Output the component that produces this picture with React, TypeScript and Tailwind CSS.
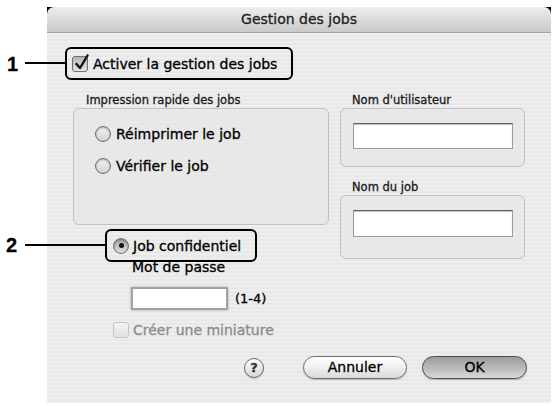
import React from "react";

function Radio({ checked = false }: { checked?: boolean }) {
  return (
    <div
      className={
        "w-[16px] h-[16px] rounded-full border border-[#6e6e6e] flex items-center justify-center shrink-0 shadow-[inset_0_1px_2px_rgba(0,0,0,0.3)] " +
        (checked
          ? "bg-gradient-to-b from-[#a4a4a4] to-[#e0e0e0]"
          : "bg-gradient-to-b from-[#f4f4f4] to-[#d2d2d2]")
      }
    >
      {checked && <div className="w-[5px] h-[5px] rounded-full bg-[#111]" />}
    </div>
  );
}

function TextField({ h }: { h: string }) {
  return (
    <div
      className={
        "w-[160px] bg-white border border-[#9c9c9c] border-t-[#5e5e5e] shadow-[inset_0_1px_1px_rgba(0,0,0,0.25)] " +
        h
      }
    />
  );
}

export default function App() {
  return (
    <div className="relative w-[556px] h-[406px] bg-white overflow-hidden pt-[7px] pl-[47px] font-['DejaVu_Sans',sans-serif] text-black [-webkit-text-stroke:0.3px_currentColor]">
      <div className="relative w-[504px] h-[396px] flex flex-col">
        <div className="absolute left-0 top-0 w-[7px] h-[7px] bg-black" />
        <div className="absolute right-0 top-0 w-[7px] h-[7px] bg-black" />
        <div className="relative z-10 h-[26px] shrink-0 rounded-t-[7px] bg-gradient-to-b from-[#eeeeee] to-[#c9c9c9] border-b border-[#a3a3a3] flex items-center justify-center text-[14px] text-[#1e1e1e]">
          Gestion des jobs
        </div>
        <div className="flex-1 flex flex-col bg-[repeating-linear-gradient(180deg,#eeeeee_0px,#eeeeee_2px,#e8e8e8_2px,#e8e8e8_4px)]">
          {/* annotated checkbox */}
          <div className="mt-[14px] ml-[18px] w-[228px] h-[33px] border-2 border-black rounded-[6px] flex items-center pl-[5px] gap-[5px]">
            <div className="relative w-[16px] h-[16px] rounded-[3px] border border-[#6f6f6f] bg-gradient-to-b from-[#b4b4b4] to-[#e6e6e6] shrink-0">
              <svg
                className="absolute left-[1px] top-[-3px]"
                width="16"
                height="17"
                viewBox="0 0 16 17"
              >
                <path
                  d="M2.5 10 L6 14 L13.5 1.5"
                  fill="none"
                  stroke="#111"
                  strokeWidth="2.4"
                  strokeLinecap="round"
                  strokeLinejoin="round"
                />
              </svg>
            </div>
            <span className="text-[14px] leading-[16px]">Activer la gestion des jobs</span>
          </div>

          <div className="mt-[12px] flex">
            {/* left column */}
            <div className="ml-[26px] w-[256px] flex flex-col">
              <div className="h-[16px] pl-[13px] text-[11.5px] leading-[16px] text-[#1a1a1a]">
                Impression rapide des jobs
              </div>
              <div className="h-[117px] rounded-[6px] border border-[#c2c2c2] bg-[#e6e6e6]/60 pt-[16px] pl-[21px] flex flex-col">
                <div className="h-[18px] flex items-center gap-[5px]">
                  <Radio />
                  <span className="text-[14px]">Réimprimer le job</span>
                </div>
                <div className="mt-[14px] h-[18px] flex items-center gap-[5px]">
                  <Radio />
                  <span className="text-[14px]">Vérifier le job</span>
                </div>
              </div>
              <div className="mt-[4px] ml-[32px] w-[152px] h-[33px] border-2 border-black rounded-[6px] flex items-center pl-[6px] gap-[4px]">
                <Radio checked />
                <span className="text-[14px] leading-[16px]">Job confidentiel</span>
              </div>
              <div className="mt-[-3px] ml-[59px] text-[14px] leading-[16px] h-[16px]">Mot de passe</div>
              <div className="mt-[12px] ml-[58px] flex items-center gap-[7px]">
                <div className="w-[97px] h-[23px] bg-white border-2 border-[#a3a3a3] shadow-[0_0_2px_rgba(0,0,0,0.35)]" />
                <span className="text-[13px]">(1-4)</span>
              </div>
              <div className="mt-[12px] ml-[40px] h-[16px] flex items-center gap-[4px]">
                <div className="w-[16px] h-[16px] rounded-[3px] border border-[#c4c4c4] bg-gradient-to-b from-[#f2f2f2] to-[#e2e2e2] shrink-0" />
                <span className="text-[14px] text-[#8c8c8c]">Créer une miniature</span>
              </div>
            </div>

            {/* right column */}
            <div className="ml-[11px] w-[185px] flex flex-col">
              <div className="h-[16px] pl-[12px] text-[11.5px] leading-[16px] text-[#1a1a1a]">
                Nom d'utilisateur
              </div>
              <div className="h-[59px] rounded-[6px] border border-[#c2c2c2] bg-[#e6e6e6]/60 pt-[14px] pl-[12px]">
                <TextField h="h-[26px]" />
              </div>
              <div className="mt-[12px] h-[16px] pl-[12px] text-[11.5px] leading-[16px] text-[#1a1a1a]">
                Nom du job
              </div>
              <div className="h-[64px] rounded-[6px] border border-[#c2c2c2] bg-[#e6e6e6]/60 pt-[14px] pl-[12px]">
                <TextField h="h-[27px]" />
              </div>
            </div>
          </div>

          {/* buttons */}
          <div className="mt-[18px] h-[23px] flex items-center">
            <div className="ml-[197px] w-[20px] h-[20px] rounded-full border border-[#6a6a6a] bg-gradient-to-b from-[#ffffff] to-[#d6d6d6] flex items-center justify-center text-[13px] font-bold text-[#333] shadow-[0_1px_1px_rgba(0,0,0,0.2)]">
              ?
            </div>
            <div className="ml-[39px] w-[104px] h-[23px] rounded-full border border-[#6c6c6c] bg-gradient-to-b from-[#ffffff] via-[#f0f0f0] to-[#d9d9d9] flex items-center justify-center text-[14px] shadow-[0_1px_1px_rgba(0,0,0,0.2)]">
              Annuler
            </div>
            <div className="ml-[15px] w-[105px] h-[23px] rounded-full border border-[#4e4e4e] bg-gradient-to-b from-[#9d9d9d] via-[#b8b8b8] to-[#dadada] flex items-center justify-center text-[14px] shadow-[0_1px_1px_rgba(0,0,0,0.25)]">
              OK
            </div>
          </div>
        </div>
      </div>

      {/* annotation callouts */}
      <div className="absolute left-[7px] top-[54px] text-[20px] leading-none font-bold font-['Liberation_Sans',sans-serif]">1</div>
      <div className="absolute left-[25px] top-[62px] w-[40px] h-[2px] bg-black" />
      <div className="absolute left-[6px] top-[235px] text-[20px] leading-none font-bold font-['Liberation_Sans',sans-serif]">2</div>
      <div className="absolute left-[25px] top-[244px] w-[80px] h-[2px] bg-black" />
    </div>
  );
}
